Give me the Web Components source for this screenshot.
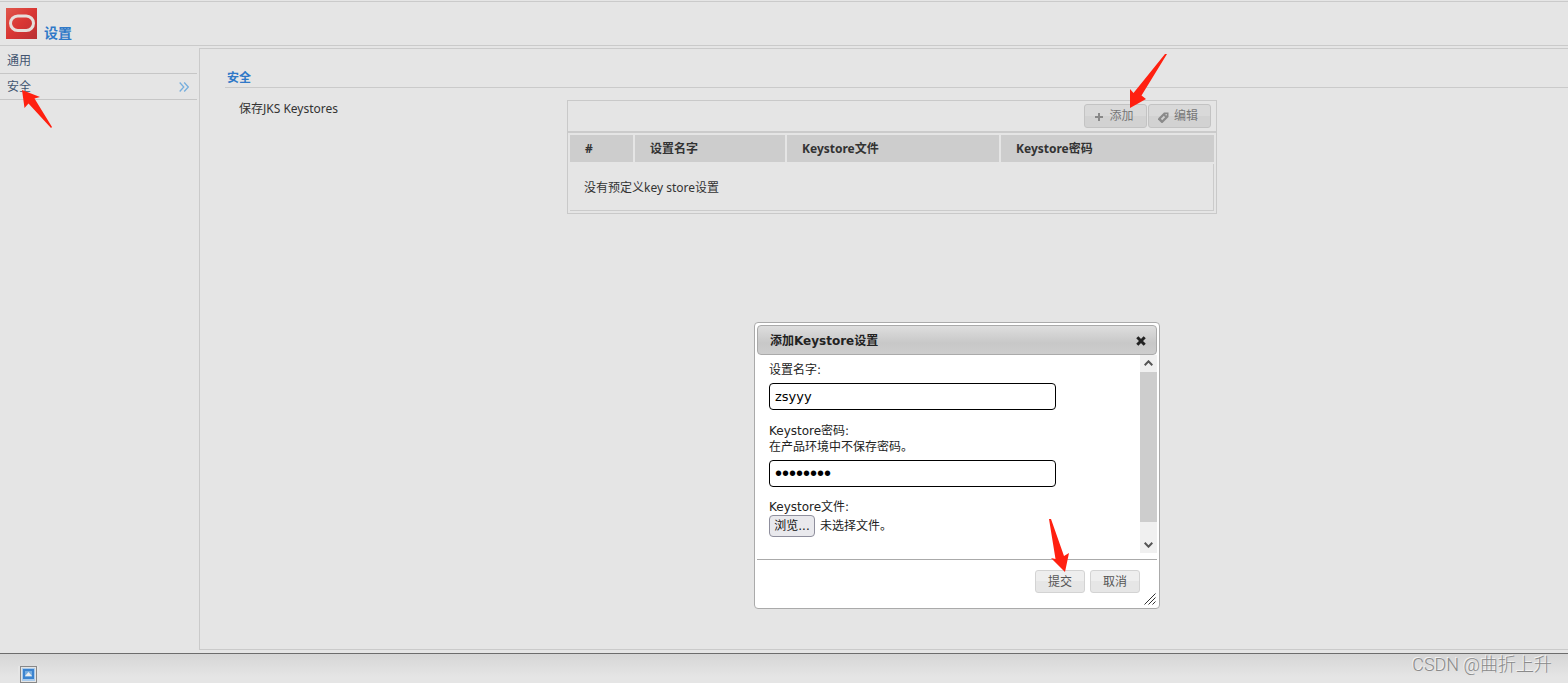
<!DOCTYPE html>
<html lang="zh-CN">
<head>
<meta charset="utf-8">
<title>设置</title>
<style>
html, body { margin: 0; height: 100%; }
body { font: 12px/16px "Noto Sans", "Noto Sans CJK SC", sans-serif; color: #333; background: #e5e5e5; overflow: hidden; }
</style>
</head>
<body>
<settings-app></settings-app>

<script>
const define = (name, html, setup) => {
  const template = document.createElement('template');
  template.innerHTML = html;
  customElements.define(name, class extends HTMLElement {
    constructor() {
      super();
      this.attachShadow({ mode: 'open' }).append(template.content.cloneNode(true));
    }
    connectedCallback() { if (setup) setup(this, this.shadowRoot); }
  });
};

define('app-header', `
<style>
:host { display: flex; align-items: flex-end; gap: 7px; box-sizing: border-box; height: 45px; margin-top: 1px; padding: 0 6px 4px; border-top: 1px solid #cacaca; border-bottom: 1px solid #cacaca; }
svg { display: block; margin-bottom: 2px; }
h1 { margin: 0; font-size: 14px; line-height: 16px; font-weight: 700; color: #3079c8; }
</style>
<svg width="31" height="31" viewBox="0 0 31 31" aria-hidden="true">
  <defs><linearGradient id="g" x1="0" y1="0" x2="1" y2="1"><stop offset="0" stop-color="#e0584d"/><stop offset=".5" stop-color="#d93633"/><stop offset="1" stop-color="#b83034"/></linearGradient></defs>
  <rect width="31" height="31" fill="url(#g)"/>
  <rect x="4.500" y="8" width="23" height="14.500" rx="7.250" fill="none" stroke="#e6dfdb" stroke-width="3"/>
</svg>
<h1><slot></slot></h1>`);

define('nav-item', `
<style>
:host { display: block; border-bottom: 1px solid #c6c6c6; }
a { display: flex; align-items: center; justify-content: space-between; height: 25px; padding: 0 8px 0 7px; color: #425470; text-decoration: none; }
svg { display: none; }
:host([current]) svg { display: block; }
</style>
<a href="#"><span><slot></slot></span>
<svg width="10" height="10" viewBox="0 0 10 10" fill="none" stroke="#76aedd" stroke-width="1.300"><path d="M.7.500 4.800 5 .7 9.500M5.200.500 9.300 5 5.200 9.500"/></svg></a>`);

define('side-nav', `
<style>
:host { display: block; }
nav { display: block; padding-top: 2px; }
</style>
<nav><slot></slot></nav>`);

define('settings-section', `
<style>
:host { display: block; padding: 21px 0 0 25px; }
h2 { margin: 0; padding: 0 2px 1px; font-size: 12px; line-height: 16px; font-weight: 700; color: #3079c8; border-bottom: 1px solid #cacaca; }
.row { display: grid; grid-template-columns: 328px minmax(0, 650px); padding: 12px 0 0 14px; }
.label { padding-top: 1px; }
</style>
<h2><slot name="title"></slot></h2>
<div class="row"><div class="label"><slot name="label"></slot></div><slot></slot></div>`);

define('tool-button', `
<style>
:host { display: block; }
button { display: flex; align-items: center; justify-content: center; gap: 5px; box-sizing: border-box; min-width: 50px; height: 23px; margin: 0; padding: 0 12px; font: inherit; color: #555; border: 1px solid #d3d3d3; border-radius: 3px; background: linear-gradient(#eee 50%, #e6e6e6 50%); cursor: pointer; }
:host([shaded]) button { width: 63px; height: 24px; padding: 0 10px 0 7px; color: #777; border-color: #c3c3c3; background: linear-gradient(#d9d9d9 50%, #d2d2d2 50%); }
</style>
<button type="button"><slot name="icon"></slot><span><slot></slot></span></button>`);

define('keystore-table', `
<style>
:host { display: block; box-sizing: border-box; border: 1px solid #c9c9c9; }
.bar { display: flex; justify-content: flex-end; gap: 1px; padding: 3px 5px 3px 0; border-bottom: 2px solid #cbcbcb; }
table { width: 100%; table-layout: fixed; border-collapse: separate; border-spacing: 2px; }
th { box-sizing: border-box; height: 27px; padding: 0 15px; text-align: left; background: #cdcdcd; font-weight: 700; }
td { box-sizing: border-box; height: 47px; padding: 2px 14px 0; border-right: 1px solid #cbcbcb; border-bottom: 1px solid #cbcbcb; }
col.n { width: 63px; } col.name { width: 150px; } col.file { width: 212px; }
svg { display: block; margin: 2px 0 0; }
</style>
<div class="bar">
  <tool-button shaded><svg slot="icon" width="10" height="10" viewBox="0 0 10 10" stroke="#888" stroke-width="2"><path d="M1 5h8M5 1v8"/></svg>添加</tool-button>
  <tool-button shaded><svg slot="icon" width="11" height="11" viewBox="0 0 11 11"><path d="M6 .5h4.500V5L4.500 11H3.500L0 7.500V6.500z" fill="#8a8a8a"/><path d="M3.500 7.500 6.500 4.500" stroke="#d0d0d0" stroke-width="1.800"/><circle cx="8.200" cy="2.800" r=".8" fill="#d6d6d6"/></svg>编辑</tool-button>
</div>
<table>
  <colgroup><col class="n"><col class="name"><col class="file"><col></colgroup>
  <thead><tr><th>#</th><th>设置名字</th><th>Keystore文件</th><th>Keystore密码</th></tr></thead>
  <tbody><tr><td colspan="4">没有预定义key store设置</td></tr></tbody>
</table>`);

define('form-field', `
<style>
:host { display: block; margin-bottom: 13px; }
label { display: block; }
p { margin: 0; }
input { display: block; box-sizing: border-box; width: 287px; height: 27px; margin: 5px 0 0; padding: 0 5px; font: 13px "DejaVu Sans", sans-serif; color: #000; background: #fff; border: 1px solid #000; border-radius: 4px; outline: none; }
input[type=password] { font: 20px "Liberation Sans", sans-serif; }
</style>
<label for="field"></label><p><slot></slot></p><input id="field">`,
(host, root) => {
  const input = root.querySelector('input');
  root.querySelector('label').textContent = host.getAttribute('label');
  input.type = host.getAttribute('type') || 'text';
  input.value = host.getAttribute('value');
});

define('file-field', `
<style>
:host { display: block; }
label { display: block; line-height: 15px; }
.row { display: flex; align-items: center; gap: 5px; }
button { box-sizing: border-box; width: 46px; height: 22px; margin: 0; padding: 0; font: inherit; color: #111; border: 1px solid #8f8f9d; border-radius: 4px; background: #e9e9ed; }
</style>
<label for="file">Keystore文件:</label>
<input id="file" type="file" hidden>
<div class="row"><button type="button">浏览...</button><span>未选择文件。</span></div>`,
(host, root) => { root.querySelector('button').onclick = () => root.querySelector('input').click(); });

define('modal-dialog', `
<style>
:host { display: block; position: absolute; box-sizing: border-box; width: 406px; padding: 2px; background: #fff; border: 1px solid #aaa; border-radius: 4px; color: #222; font-family: "DejaVu Sans", "Noto Sans CJK SC", sans-serif; }
header { display: flex; align-items: center; justify-content: space-between; box-sizing: border-box; height: 30px; padding: 1px 10px 0 12px; border: 1px solid #aaa; border-radius: 4px; background: linear-gradient(#dedede, #c8c8c8 60%, #cdcdcd); font-weight: 700; }
.close { display: block; width: 10px; height: 10px; padding: 0; border: 0; background: none; }
svg { display: block; }
.view { display: grid; grid-template-columns: 1fr 17px; height: 198px; }
.body { padding: 7px 12px 0; overflow: hidden; }
.scroll { display: grid; grid-template-rows: 17px 1fr 31px; background: #f0f0f0; }
.scroll svg { align-self: end; justify-self: center; margin-bottom: 5px; }
.thumb { background: #cdcdcd; }
footer { display: flex; justify-content: flex-end; gap: 5px; margin-top: 6px; padding: 10px 17px 13px 0; border-top: 1px solid #aaa; font-family: "Noto Sans", "Noto Sans CJK SC", sans-serif; }
.grip { position: absolute; right: 3px; bottom: 3px; }
</style>
<header><span><slot name="title"></slot></span>
<button class="close" type="button" aria-label="关闭"><svg width="10" height="10" viewBox="0 0 10 10" stroke="#222" stroke-width="3"><path d="M1.300 1.300 8.700 8.700M8.700 1.300 1.300 8.700"/></svg></button></header>
<div class="view"><div class="body"><slot></slot></div>
<div class="scroll">
  <svg width="9" height="7" viewBox="0 0 9 7" fill="none" stroke="#555" stroke-width="2"><path d="M.7 5.200 4.500 1.300 8.300 5.200"/></svg>
  <div class="thumb"></div>
  <svg width="9" height="6" viewBox="0 0 9 6" fill="none" stroke="#555" stroke-width="2"><path d="M.7.800 4.500 4.700 8.300.800"/></svg>
</div></div>
<footer><slot name="actions"></slot></footer>
<svg class="grip" width="12" height="12" viewBox="0 0 12 12" stroke="#333" stroke-width="1"><path d="M.5 11.500l11-11M4.500 11.500l7-7M8.500 11.500l3-3"/></svg>`);

define('task-bar', `
<style>
:host { display: flex; justify-content: space-between; box-sizing: border-box; height: 30px; padding: 0 16px 0 18px; border-top: 1px solid #6c6c6c; background: linear-gradient(#d6d6d6, #e5e5e5 80%); }
button { display: block; align-self: flex-end; width: 21px; height: 17px; margin: 0; padding: 0 0 0 2px; border: 0; background: #e5e5e5; }
svg { display: block; }
.mark { font: 18px/22px Roboto, "Noto Sans CJK SC", sans-serif; font-weight: 300; color: #8a8a8a; text-shadow: -1px -1px 0 #f2f2f2; }
</style>
<button type="button" aria-label="显示窗口"><svg width="17" height="17" viewBox="0 0 17 17"><rect x=".5" y=".5" width="16" height="16" fill="#e4e4e4" stroke="#888"/><rect x="2" y="2" width="13" height="13" fill="#a9cbec"/><rect x="3" y="3" width="11" height="10" fill="#3b83cf"/><rect x="5" y="5" width="7" height="6" fill="#75acdf"/><path d="M5 10 8.500 6 12 10z" fill="#eee"/></svg></button>
<span class="mark">CSDN @曲折上升</span>`);

define('pointer-arrow', `
<style>:host { display: block; position: absolute; pointer-events: none; } svg { display: block; }</style>
<svg><polygon fill="#ff2010"/></svg>`,
(host, root) => {
  const svg = root.querySelector('svg');
  svg.setAttribute('width', host.getAttribute('width'));
  svg.setAttribute('height', host.getAttribute('height'));
  root.querySelector('polygon').setAttribute('points', host.getAttribute('shape'));
});

define('settings-app', `
<style>
:host { display: flex; flex-direction: column; height: 100%; position: relative; }
.main { display: grid; grid-template-columns: 197px minmax(0, 1fr); gap: 2px; flex: 1; min-height: 0; }
.content { display: block; margin: 2px 0 3px; border: 1px solid #cacaca; border-right: 0; }
modal-dialog { left: 754px; top: 322px; }
.a1 { left: 22px; top: 90px; }
.a2 { left: 1129px; top: 54px; }
.a3 { left: 1049px; top: 519px; }
</style>
<app-header>设置</app-header>
<div class="main">
  <side-nav><nav-item>通用</nav-item><nav-item current>安全</nav-item></side-nav>
  <main class="content">
    <settings-section>
      <span slot="title">安全</span>
      <span slot="label">保存JKS Keystores</span>
      <keystore-table></keystore-table>
    </settings-section>
  </main>
</div>
<task-bar></task-bar>
<modal-dialog role="dialog" aria-label="添加Keystore设置">
  <span slot="title">添加Keystore设置</span>
  <form-field label="设置名字:" value="zsyyy"></form-field>
  <form-field label="Keystore密码:" type="password" value="12345678">在产品环境中不保存密码。</form-field>
  <file-field></file-field>
  <tool-button slot="actions">提交</tool-button>
  <tool-button slot="actions">取消</tool-button>
</modal-dialog>
<pointer-arrow class="a1" width="32" height="39" shape="0,0 18,7 12.5,8.500 30,37 29,38 6.5,13.500 2.5,18"></pointer-arrow>
<pointer-arrow class="a2" width="39" height="55" shape="1,54 1,35 4.500,39 36,0 38,0 12.500,41.500 17,45"></pointer-arrow>
<pointer-arrow class="a3" width="21" height="54" shape="16,53 2,39 6.500,40 0,0 2,0 15,37 20,34"></pointer-arrow>`);
</script>
</body>
</html>
